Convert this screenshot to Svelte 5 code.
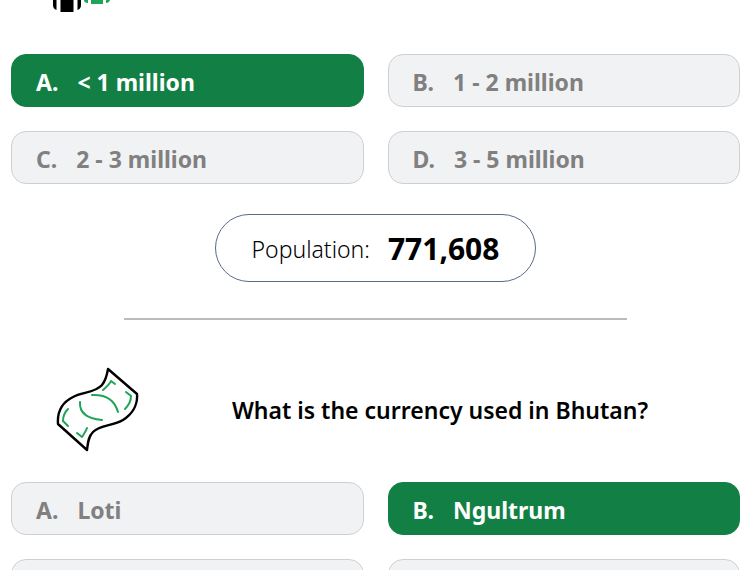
<script lang="ts">
  type Option = { letter: string; text: string };

  const population: Option[] = [
    { letter: "A.", text: "< 1 million" },
    { letter: "B.", text: "1 - 2 million" },
    { letter: "C.", text: "2 - 3 million" },
    { letter: "D.", text: "3 - 5 million" },
  ];
  const currency: Option[] = [
    { letter: "A.", text: "Loti" },
    { letter: "B.", text: "Ngultrum" },
    { letter: "", text: "" },
    { letter: "", text: "" },
  ];

  let populationPick = $state(0);
  let currencyPick = $state(1);
</script>

<main>
  <section>
    <div class="people">
      <svg width="58" height="12" viewBox="0 0 58 12" aria-hidden="true">
        <path d="M0 0h3.5v10Q0 9 0 5zM24.500 0H28v5q0 4-3.500 5z" fill="#000" />
        <path d="M7.500 0h13v12h-13z" fill="#000" />
        <path d="M31 0h4v3q-4 0-4-3zM38 0h12v4H38zM53 0h4q-1 3-4 3z" fill="#1fa458" />
      </svg>
    </div>
    <div class="options">
      {#each population as option, idx}
        <button
          class="option"
          class:option--right={idx === populationPick}
          onclick={() => (populationPick = idx)}
        >
          <span>{option.letter}</span>
          <span>{option.text}</span>
        </button>
      {/each}
    </div>
    <p class="answer">
      <span class="answer-label">Population:</span>
      <strong>771,608</strong>
    </p>
  </section>

  <hr />

  <section>
    <div class="question">
      <svg width="84" height="86" viewBox="0 0 84 86" fill="none" aria-hidden="true">
        <g stroke="#000" stroke-width="2.400" stroke-linejoin="round">
          <path
            d="M52 3L81 28C82 40 75 49 67 54C57 60 44 59 37 66C32 71 32 77 31 84L2 58C1 45 7 36 17 31C26 26 39 27 46 19C50 14 51 9 52 3Z"
          />
        </g>
        <g stroke="#1fa458" stroke-width="2" stroke-linecap="round" stroke-linejoin="round">
          <path d="M36 29Q57 28 62 46" />
          <path d="M24 36Q23 52 46 54" />
          <path d="M47 24Q54 18 55 15L59 18" />
          <path d="M70 26L75 30Q75 37 69 43" />
          <path d="M12 43Q7 48 7 55L12 60" />
          <path d="M21 67L26 71Q30 65 31 62" />
        </g>
      </svg>
      <h2>What is the currency used in Bhutan?</h2>
    </div>
    <div class="options">
      {#each currency as option, idx}
        <button
          class="option"
          class:option--right={idx === currencyPick}
          onclick={() => (currencyPick = idx)}
        >
          <span>{option.letter}</span>
          <span>{option.text}</span>
        </button>
      {/each}
    </div>
  </section>
</main>

<style>
  main {
    box-sizing: border-box;
    height: 100vh;
    overflow: hidden;
    padding: 0 10px 0 11px;
    background: #fff;
    color: #000;
    font-family: "Noto Sans", "Open Sans", sans-serif;
  }
  .people {
    height: 54px;
    padding-left: 42px;
  }
  svg {
    display: block;
    flex-shrink: 0;
  }
  .options {
    display: grid;
    grid-template-columns: 1fr 1fr;
    gap: 24px;
  }
  .option {
    display: flex;
    align-items: center;
    gap: 19px;
    box-sizing: border-box;
    height: 53px;
    padding: 2px 24px 0;
    border: 1px solid #cdcfd3;
    border-radius: 15px;
    background: #f1f2f4;
    color: #808080;
    font: inherit;
    font-size: 23px;
    font-weight: 700;
    line-height: 32px;
    text-align: left;
    cursor: pointer;
  }
  .option--right {
    border-color: #128044;
    background: #128044;
    color: #fff;
  }
  .answer {
    display: flex;
    align-items: center;
    gap: 18px;
    box-sizing: border-box;
    width: fit-content;
    height: 68px;
    margin: 30px auto 0;
    padding: 2px 36px 0;
    border: 1px solid #5b6b84;
    border-radius: 34px;
    line-height: 32px;
  }
  .answer-label {
    font-size: 23px;
    font-weight: 300;
  }
  .answer strong {
    font-size: 30px;
    font-weight: 700;
  }
  hr {
    width: 69%;
    height: 2px;
    margin: 36px auto 0;
    border: 0;
    background: #b9bcbb;
  }
  .question {
    display: flex;
    align-items: center;
    height: 162px;
    padding: 16px 0 0 45px;
    box-sizing: border-box;
  }
  h2 {
    flex: 1;
    margin: 0;
    padding-top: 2px;
    font-size: 23px;
    font-weight: 600;
    line-height: 32px;
    text-align: center;
  }
</style>
